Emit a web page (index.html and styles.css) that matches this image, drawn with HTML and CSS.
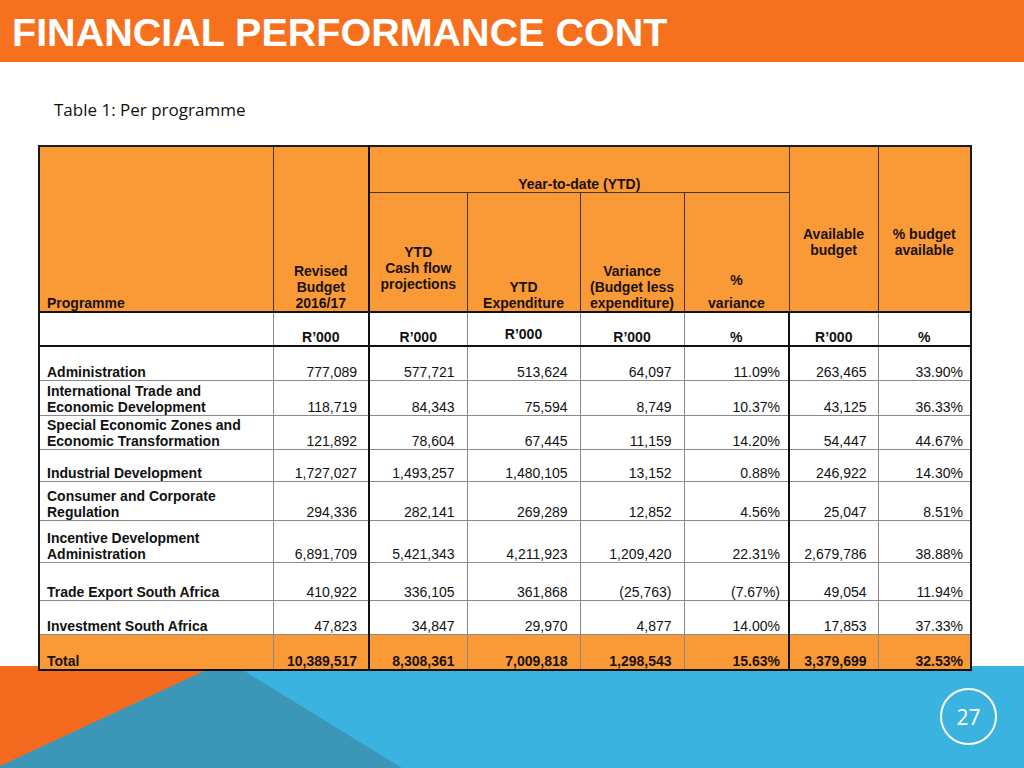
FILE: index.html
```html
<!DOCTYPE html>
<html lang="en">
<head>
<meta charset="utf-8">
<title>Financial Performance Cont</title>
<link rel="stylesheet" href="styles.css">
</head>
<body>
<div class="slide">
  <svg class="deco" width="1024" height="102" viewBox="0 0 1024 102" aria-hidden="true">
    <rect x="0" y="0" width="1024" height="102" fill="#3AB3E0"/>
    <polygon points="0,0 236,0 402,102 0,102" fill="#3B96B8"/>
    <polygon points="0,0 215,0 0,100" fill="#F46B1F"/>
  </svg>

  <header class="title-bar">
    <h1>FINANCIAL PERFORMANCE CONT</h1>
  </header>

  <p class="caption">Table 1: Per programme</p>

  <table class="fin">
    <colgroup>
      <col class="c-prog"><col class="c-rev"><col class="c-cash"><col class="c-exp">
      <col class="c-var"><col class="c-pvar"><col class="c-avail"><col class="c-pavail">
    </colgroup>
    <thead>
      <tr class="h1">
        <th rowspan="2" class="th-prog">Programme</th>
        <th rowspan="2" class="th-rev">Revised<br>Budget<br>2016/17</th>
        <th colspan="4" class="th-ytd">Year-to-date (YTD)</th>
        <th rowspan="2" class="th-avail">Available<br>budget</th>
        <th rowspan="2" class="th-avail">% budget<br>available</th>
      </tr>
      <tr class="h2">
        <th class="th-cash">YTD<br>Cash flow<br>projections</th>
        <th class="th-bot">YTD<br>Expenditure</th>
        <th class="th-bot">Variance<br>(Budget less<br>expenditure)</th>
        <th class="th-bot"><span class="pct">%</span>variance</th>
      </tr>
    </thead>
    <tbody>
      <tr class="units">
        <td></td><td>R’000</td><td class="k">R’000</td><td class="up">R’000</td><td>R’000</td><td>%</td><td class="k">R’000</td><td>%</td>
      </tr>
      <tr class="r34"><th>Administration</th><td>777,089</td><td class="k">577,721</td><td>513,624</td><td>64,097</td><td>11.09%</td><td class="k">263,465</td><td>33.90%</td></tr>
      <tr class="r35"><th>International Trade and<br>Economic Development</th><td>118,719</td><td class="k">84,343</td><td>75,594</td><td>8,749</td><td>10.37%</td><td class="k">43,125</td><td>36.33%</td></tr>
      <tr class="r34"><th>Special Economic Zones and<br>Economic Transformation</th><td>121,892</td><td class="k">78,604</td><td>67,445</td><td>11,159</td><td>14.20%</td><td class="k">54,447</td><td>44.67%</td></tr>
      <tr class="r32"><th>Industrial Development</th><td>1,727,027</td><td class="k">1,493,257</td><td>1,480,105</td><td>13,152</td><td>0.88%</td><td class="k">246,922</td><td>14.30%</td></tr>
      <tr class="r39"><th>Consumer and Corporate<br>Regulation</th><td>294,336</td><td class="k">282,141</td><td>269,289</td><td>12,852</td><td>4.56%</td><td class="k">25,047</td><td>8.51%</td></tr>
      <tr class="r42"><th>Incentive Development<br>Administration</th><td>6,891,709</td><td class="k">5,421,343</td><td>4,211,923</td><td>1,209,420</td><td>22.31%</td><td class="k">2,679,786</td><td>38.88%</td></tr>
      <tr class="r38"><th>Trade Export South Africa</th><td>410,922</td><td class="k">336,105</td><td>361,868</td><td>(25,763)</td><td>(7.67%)</td><td class="k">49,054</td><td>11.94%</td></tr>
      <tr class="r34"><th>Investment South Africa</th><td>47,823</td><td class="k">34,847</td><td>29,970</td><td>4,877</td><td>14.00%</td><td class="k">17,853</td><td>37.33%</td></tr>
      <tr class="total"><th>Total</th><td>10,389,517</td><td class="k">8,308,361</td><td>7,009,818</td><td>1,298,543</td><td>15.63%</td><td class="k">3,379,699</td><td>32.53%</td></tr>
    </tbody>
  </table>

  <div class="page-num">27</div>
</div>
</body>
</html>
```

FILE: styles.css
```css
* { box-sizing: border-box; }

html, body {
  margin: 0;
  padding: 0;
  background: #ffffff;
}

.slide {
  position: relative;
  width: 1024px;
  height: 768px;
  overflow: hidden;
  background: #ffffff;
  font-family: "Liberation Sans", Arial, sans-serif;
  color: #111;
}

.deco {
  position: absolute;
  left: 0;
  bottom: 0;
  display: block;
}

.title-bar {
  position: relative;
  height: 62px;
  background: #F7701E;
  padding: 10px 0 0 12px;
}

.title-bar h1 {
  margin: 0;
  font-family: "Liberation Sans", Arial, sans-serif;
  font-weight: bold;
  font-size: 39.5px;
  line-height: 44px;
  color: #ffffff;
  letter-spacing: 0;
  white-space: nowrap;
}

.caption {
  position: relative;
  margin: 36px 0 0 54px;
  font-family: "Open Sans", "Noto Sans", sans-serif;
  font-size: 17px;
  line-height: 23px;
  color: #111;
}

.fin {
  position: relative;
  margin: 24px 0 0 38px;
  width: 932px;
  table-layout: fixed;
  border-collapse: collapse;
  border: 2px solid #1a1a1a;
  font-size: 14px;
  line-height: 16px;
}

.c-prog { width: 234px; }
.c-rev { width: 96px; }
.c-cash { width: 98px; }
.c-exp { width: 113px; }
.c-var { width: 104px; }
.c-pvar { width: 105px; }
.c-avail { width: 89px; }
.c-pavail { width: 93px; }

.fin thead th {
  background: #FA9A37;
  border: 1px solid #4a3420;
  font-weight: bold;
  text-align: center;
  vertical-align: bottom;
  padding: 0 3px 0;
  color: #1a1208;
}

.fin thead tr.h1 { height: 46px; }
.fin thead tr.h2 { height: 120px; }
.fin thead tr.h2 th,
.fin thead tr.h1 .th-prog,
.fin thead tr.h1 .th-rev,
.fin thead tr.h1 .th-avail { border-bottom: 2px solid #111; }

.fin thead .th-prog { text-align: left; padding-left: 7px; }
.fin thead .th-ytd { padding-bottom: 0; }
.fin thead .th-rev { border-right: 2px solid #111; }
.fin thead .th-cash { padding-bottom: 19px; }
.fin thead .th-avail { vertical-align: top; padding-top: 79px; }
.fin thead .pct { display: block; margin-bottom: 7px; }

.fin tbody td,
.fin tbody th {
  border: 1px solid #8a8a8a;
  vertical-align: bottom;
  padding: 0 11px 0 4px;
}

.fin tbody th {
  text-align: left;
  font-weight: bold;
  border-left: 2px solid #1a1a1a;
  padding-left: 7px;
}

.fin tbody td { text-align: right; font-weight: normal; }
.fin tbody td:nth-child(3),
.fin tbody td:nth-child(4),
.fin tbody td:nth-child(5) { padding-right: 12px; }
.fin tbody td:nth-child(6) { padding-right: 8px; }
.fin tbody td:nth-child(8) { padding-right: 7px; }
.fin tbody td.k { border-left: 2px solid #111; }

.fin tr.units { height: 34px; }
.fin tr.units td {
  text-align: center;
  font-weight: bold;
  border-bottom: 2px solid #111;
  padding: 0 4px 0;
}
.fin tr.units td.up { padding-bottom: 3px; }

.fin tr.r32 { height: 32px; }
.fin tr.r34 { height: 34px; }
.fin tr.r35 { height: 35px; }
.fin tr.r38 { height: 38px; }
.fin tr.r39 { height: 39px; }
.fin tr.r42 { height: 42px; }

.fin tr.total { height: 36px; }
.fin tr.total th,
.fin tr.total td {
  background: #FA9A37;
  font-weight: bold;
  border-top: 1px solid #555;
  border-bottom: 2px solid #111;
  color: #1a1208;
}
.fin tr.total td { border-left: 1px solid #4a3420; }
.fin tr.total td.k { border-left: 2px solid #111; }

.page-num {
  position: absolute;
  left: 940px;
  top: 688px;
  width: 57px;
  height: 57px;
  border: 2px solid #ffffff;
  border-radius: 50%;
  display: flex;
  align-items: center;
  justify-content: center;
  font-family: "Open Sans", "Noto Sans", sans-serif;
  font-size: 21px;
  color: #ffffff;
}
```
